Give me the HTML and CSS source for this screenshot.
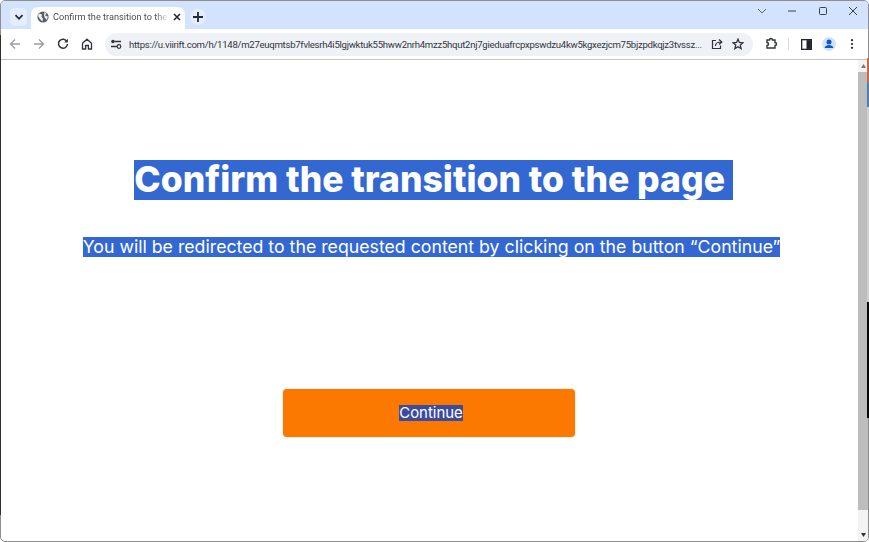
FILE: index.html
```html
<!DOCTYPE html>
<html lang="en">
<head>
<meta charset="utf-8">
<title>Confirm the transition to the page</title>
<link rel="stylesheet" href="styles.css">
</head>
<body>
<div class="window">
  <header class="tabbar">
    <button class="tab-search" aria-label="Search tabs"><svg width="10" height="10" viewBox="0 0 10 10"><path d="M1.500 3.200 5 6.800l3.500-3.600" fill="none" stroke="#1f2a3a" stroke-width="1.800"/></svg></button>
    <div class="tab">
      <svg class="globe" width="12" height="12" viewBox="0 0 12 12"><circle cx="6" cy="6" r="5.600" fill="#5a5f66"/><path d="M2 2.500 5 3.500 4.500 6 6 7.500 5.500 10.500 3 8 1 5ZM7.500 1 9.500 2.500 8 4.500 10.800 5.500 10 9 8 7 7 4.500Z" fill="#eef1f6"/></svg>
      <span class="tab-title">Confirm the transition to the pa</span>
      <svg class="tab-close" width="8" height="8" viewBox="0 0 8 8"><path d="M1 1l6 6M7 1 1 7" stroke="#20242a" stroke-width="1.500"/></svg>
    </div>
    <button class="new-tab" aria-label="New tab"><svg width="10" height="10" viewBox="0 0 10 10"><path d="M5 0v10M0 5h10" stroke="#1f2a3a" stroke-width="1.800"/></svg></button>
    <div class="window-controls">
      <svg width="10" height="10" viewBox="0 0 10 10"><path d="M1 3l4 4 4-4" fill="none" stroke="#5c6470" stroke-width="1"/></svg>
      <svg width="10" height="10" viewBox="0 0 10 10"><path d="M1 5h8" stroke="#3a4048" stroke-width="1"/></svg>
      <svg width="10" height="10" viewBox="0 0 10 10"><rect x="1.500" y="1.500" width="7" height="7" rx="1" fill="none" stroke="#3a4048"/></svg>
      <svg width="10" height="10" viewBox="0 0 10 10"><path d="M1 1l8 8M9 1 1 9" stroke="#3a4048" stroke-width="1"/></svg>
    </div>
  </header>
  <nav class="toolbar">
    <svg class="nav-icon" width="12" height="12" viewBox="0 0 12 12"><path d="M11 6H1.500M6 1.500 1.500 6 6 10.500" fill="none" stroke="#9aa0a6" stroke-width="1.400"/></svg>
    <svg class="nav-icon" width="12" height="12" viewBox="0 0 12 12"><path d="M1 6h9.500M6 1.500 10.500 6 6 10.500" fill="none" stroke="#9aa0a6" stroke-width="1.400"/></svg>
    <svg class="nav-icon" width="12" height="12" viewBox="0 0 12 12"><path d="M10 3.600A4.500 4.500 0 1 0 10.500 6" fill="none" stroke="#30343a" stroke-width="1.500"/><path d="M10.800 .8v3.600H7.200z" fill="#30343a"/></svg>
    <svg class="nav-icon" width="12" height="12" viewBox="0 0 12 12"><path d="M1.500 5.200 6 1.200l4.500 4V11H7.400V7.500H4.600V11H1.500Z" fill="none" stroke="#30343a" stroke-width="1.300"/></svg>
    <div class="omnibox">
      <svg class="tune" width="12" height="12" viewBox="0 0 12 12"><circle cx="3" cy="3.500" r="1.800" fill="#30343a"/><path d="M5 3.500h6M1 8.500h6" stroke="#30343a" stroke-width="1.300"/><circle cx="9" cy="8.500" r="1.800" fill="none" stroke="#30343a" stroke-width="1.200"/></svg>
      <span class="url">https://u.viirift.com/h/1148/m27euqmtsb7fvlesrh4i5lgjwktuk55hww2nrh4mzz5hqut2nj7gieduafrcpxpswdzu4kw5kgxezjcm75bjzpdkqjz3tvssz...</span>
      <svg class="omni-icon" width="12" height="12" viewBox="0 0 12 12"><path d="M5 2.500H1.500v8h8V7.500" fill="none" stroke="#30343a" stroke-width="1.200"/><path d="M4.500 8C4.500 5 6.500 4 10 4M8 1.500 10.800 4 8 6.500" fill="none" stroke="#30343a" stroke-width="1.200"/></svg>
      <svg class="omni-icon" width="12" height="12" viewBox="0 0 12 12"><path d="M6 1.200 7.400 4.500l3.600.3-2.700 2.300.8 3.500L6 8.800l-3.100 1.800.8-3.500L1 4.800l3.600-.3Z" fill="none" stroke="#30343a" stroke-width="1.300"/></svg>
    </div>
    <svg class="ext" width="14" height="14" viewBox="0 0 14 14"><path d="M3 3h2.500a1.500 1.500 0 0 1 3 0H11v2.500a1.500 1.500 0 0 1 0 3V11H3V8.500a1.500 1.500 0 0 0 0-3Z" fill="none" stroke="#30343a" stroke-width="1.400"/></svg>
    <span class="divider"></span>
    <svg class="side" width="11" height="11" viewBox="0 0 10 10"><rect x=".6" y=".6" width="8.800" height="8.800" fill="none" stroke="#20242a" stroke-width="1.200"/><rect x="5" y="1" width="4" height="8" fill="#20242a"/></svg>
    <span class="avatar"><svg width="14" height="14" viewBox="0 0 14 14"><circle cx="7" cy="7" r="7" fill="#d3e3fd"/><circle cx="7" cy="5" r="2.500" fill="#0b57d0"/><path d="M2.500 11c.8-2.200 2.500-3 4.500-3s3.700.8 4.500 3Z" fill="#0b57d0"/></svg></span>
    <svg class="menu" width="4" height="10" viewBox="0 0 4 10"><circle cx="2" cy="1.200" r="1.100" fill="#20242a"/><circle cx="2" cy="5" r="1.100" fill="#20242a"/><circle cx="2" cy="8.800" r="1.100" fill="#20242a"/></svg>
  </nav>
  <div class="viewport">
    <main class="page">
      <h1 class="title"><span class="selected">Confirm the transition to the page&nbsp;</span></h1>
      <p class="lead"><span class="selected">You will be redirected to the requested content by clicking on the button “Continue”</span></p>
      <a class="continue" href="#"><span class="selected-dark">Continue</span></a>
    </main>
    <div class="scrollbar">
      <svg class="arrow" width="5" height="4" viewBox="0 0 5 4"><path d="M0 4 2.500 0 5 4Z" fill="#7a7a7a"/></svg>
      <div class="thumb"></div>
      <svg class="arrow" width="5" height="4" viewBox="0 0 5 4"><path d="M0 0 2.500 4 5 0Z" fill="#333"/></svg>
    </div>
  </div>
</div>
</body>
</html>
```
FILE: styles.css
```css
* { box-sizing: border-box; }
html, body { margin: 0; height: 100%; overflow: hidden; background: #fff; }
button { border: 0; padding: 0; }
svg { display: block; flex: none; }
.window {
  position: relative;
  height: 542px;
  display: flex;
  flex-direction: column;
  font-family: "Liberation Sans", Arial, sans-serif;
  border: 1px solid #8e8e8e;
  border-radius: 5px;
}
.window::before {
  content: "";
  position: absolute;
  left: -1px;
  top: 34px;
  width: 1px;
  height: 480px;
  background: #2e2e2e;
}
.window::after {
  content: "";
  position: absolute;
  right: -1px;
  top: 57px;
  width: 2px;
  height: 360px;
  background: linear-gradient(to bottom,
    #c8694a 0 25px, #4c80b0 25px 49px, #cfcfcf 49px 244px, #0a0a0a 244px 100%);
}
.tabbar {
  height: 28px;
  flex: none;
  display: flex;
  align-items: flex-end;
  background: #d3e3fd;
  padding-left: 9px;
  border-radius: 4px 4px 0 0;
}
.tab-search, .new-tab {
  width: 16px;
  height: 16px;
  border-radius: 50%;
  background: #e4edfc;
  display: flex;
  align-items: center;
  justify-content: center;
  margin-bottom: 4px;
}
.tab-search { border-radius: 5px; width: 17px; height: 18px; margin-bottom: 3px; }
.tab {
  width: 154px;
  height: 22px;
  margin-left: 4px;
  background: #fff;
  border-radius: 7px 7px 0 0;
  display: flex;
  align-items: center;
  padding: 0 8px 3px 6px;
  gap: 4px;
}
.tab-title {
  font-size: 9.200px;
  color: #4c4f54;
  font-family: Roboto, sans-serif;
  white-space: nowrap;
  width: 116px;
  -webkit-mask-image: linear-gradient(to right, #000 88%, transparent);
  mask-image: linear-gradient(to right, #000 88%, transparent);
}
.new-tab { margin-left: 5px; }
.window-controls {
  margin-left: auto;
  align-self: flex-start;
  display: flex;
  gap: 20.500px;
  padding: 5px 10px 0 0;
}
.toolbar {
  height: 31px;
  flex: none;
  background: #fff;
  border-bottom: 1px solid #c4c4c4;
  display: flex;
  align-items: center;
  padding-left: 8px;
}
.nav-icon { margin-right: 12px; }
.omnibox {
  width: 648px;
  height: 23px;
  border-radius: 12px;
  background: #eef1f6;
  display: flex;
  align-items: center;
  padding: 0 9px 0 4px;
}
.tune { margin-left: 1px; }
.url {
  margin-left: 7px;
  font-family: Roboto, sans-serif;
  font-size: 9.600px;
  letter-spacing: -0.285px;
  color: #33373c;
  white-space: nowrap;
  width: 573px;
}
.omni-icon { margin-left: 9px; }
.ext { margin-left: 11px; }
.divider { width: 1px; height: 12px; background: #dcdcdc; margin: 0 12px 0 10px; }
.avatar { margin-left: 10px; }
.menu { margin-left: 14px; }
.viewport {
  flex: 1;
  min-height: 0;
  display: flex;
}
.page {
  flex: 1;
  min-width: 0;
  display: flex;
  flex-direction: column;
  align-items: center;
  padding-top: 100px;
}
.title {
  margin: 0;
  font-family: Inter, sans-serif;
  font-weight: 800;
  font-size: 35.500px;
  line-height: 40px;
  white-space: nowrap;
  color: #fff;
  padding-left: 8px;
}
.lead {
  margin: 37px 0 0;
  font-family: Inter, sans-serif;
  font-size: 17.730px;
  line-height: 20px;
  color: #fff;
  white-space: nowrap;
  padding-left: 4px;
}
.selected { background: #3367d1; display: inline-block; }
.continue {
  margin: 132px 2px 0 0;
  width: 292px;
  height: 48px;
  border-radius: 4px;
  background: #fb7900;
  box-shadow: 0 0 2px #fcc48c;
  display: flex;
  align-items: center;
  justify-content: center;
  color: #fff;
  font-family: Inter, sans-serif;
  font-size: 14.900px;
  text-decoration: none;
  padding-left: 5px;
}
.selected-dark { background: #3b4ba0; line-height: 16px; display: inline-block; }
.scrollbar {
  width: 10px;
  flex: none;
  display: flex;
  flex-direction: column;
  align-items: center;
  background: #f3f3f3;
  padding: 4px 0;
  border-bottom-right-radius: 4px;
}
.thumb {
  align-self: stretch;
  flex: 1;
  margin: 4px 0 23px;
  background: #bdbdbd;
}
```
